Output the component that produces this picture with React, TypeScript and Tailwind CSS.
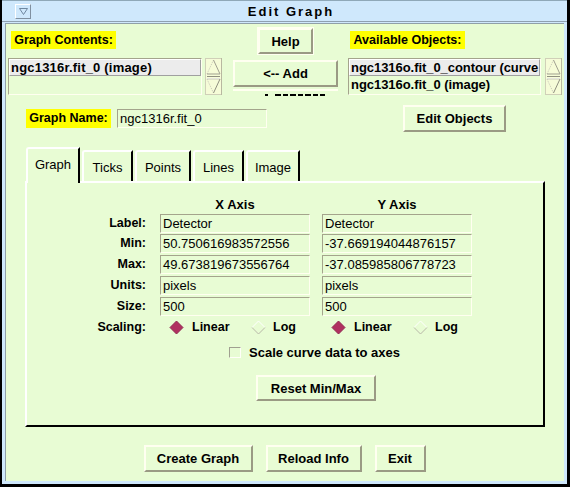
import React from "react";

function RaisedBtn({ children, className = "" }: { children: React.ReactNode; className?: string }) {
  return (
    <div
      className={`flex items-center justify-center border-2 border-t-[#fffff0] border-l-[#fffff0] border-b-[#9a9a84] border-r-[#9a9a84] bg-[#e8fcd4] font-bold text-[13px] leading-none whitespace-nowrap ${className}`}
    >
      {children}
    </div>
  );
}

function Field({ value, className = "" }: { value: string; className?: string }) {
  return (
    <div
      className={`h-full border border-t-[#a4a48c] border-l-[#a4a48c] border-b-[#fffff0] border-r-[#fffff0] flex items-center pl-[2px] text-[13px] leading-none whitespace-nowrap overflow-hidden ${className}`}
    >
      {value}
    </div>
  );
}

function ScrollArrows() {
  return (
    <svg width="17" height="37" viewBox="0 0 17 37" className="shrink-0">
      <rect x="0.5" y="0.5" width="16" height="36" fill="#f6fcd8" stroke="#d0d0b8" />
      <line x1="16.5" y1="0" x2="16.5" y2="37" stroke="#b8b8a0" />
      <polyline points="2,16 8.5,2" fill="none" stroke="#c8c8b8" strokeDasharray="1 1" />
      <polyline points="8.5,2 15,16 2,16" fill="none" stroke="#a0a090" />
      <line x1="2" y1="18.5" x2="15" y2="18.5" stroke="#909080" />
      <line x1="2" y1="20.5" x2="15" y2="20.5" stroke="#ffffff" />
      <polyline points="2,21 15,21" fill="none" stroke="#c8c8b8" />
      <polyline points="2,21 8.5,35" fill="none" stroke="#c8c8b8" strokeDasharray="1 1" />
      <polyline points="15,21 8.5,35" fill="none" stroke="#909080" />
    </svg>
  );
}

function Diamond({ filled }: { filled: boolean }) {
  return (
    <svg width="15" height="15" viewBox="0 0 15 15" className="shrink-0">
      {filled ? (
        <polygon points="7.5,1 14,7.5 7.5,14 1,7.5" fill="#b03060" stroke="#902850" strokeWidth="1" />
      ) : (
        <>
          <polyline points="1,7.5 7.5,1 14,7.5" fill="none" stroke="#ffffff" strokeWidth="1" />
          <polyline points="1,7.5 7.5,14 14,7.5" fill="none" stroke="#b8b8a8" strokeWidth="1" />
        </>
      )}
    </svg>
  );
}

function ListBox({ items, width, tracking }: { items: string[]; width: string; tracking: string }) {
  return (
    <div
      className={`${width} h-[37px] border border-t-[#a4a48c] border-l-[#a4a48c] border-b-[#fffff0] border-r-[#fffff0] overflow-hidden flex flex-col`}
    >
      {items.map((it, i) => (
        <div
          key={i}
          className={`h-[17px] shrink-0 flex items-center pl-[1px] font-bold text-[13px] ${tracking} leading-none whitespace-nowrap ${
            i === 0 ? "bg-[#ececec] border border-t-[#ffffff] border-l-[#ffffff] border-b-[#a0a0a0] border-r-[#a0a0a0]" : "border border-transparent"
          }`}
        >
          {it}
        </div>
      ))}
    </div>
  );
}

function YLabel({ children, className = "" }: { children: React.ReactNode; className?: string }) {
  return (
    <div className={`bg-[#ffff00] flex items-center justify-center font-bold text-[12.5px] leading-none whitespace-nowrap ${className}`}>
      {children}
    </div>
  );
}

function Tab({ label, selected, w }: { label: string; selected?: boolean; w: string }) {
  return (
    <div
      className={`${w} ${
        selected ? "h-[36px] -mb-[2px] pb-[4px] z-10" : "h-[31px] pt-[1px]"
      } bg-[#e8fcd4] border-l-2 border-t-2 border-r-2 border-l-white border-t-white border-r-black rounded-tl-[3px] flex items-center justify-center text-[13px] leading-none`}
    >
      {label}
    </div>
  );
}

function AxisRow({ label, x, y, mt }: { label: string; x: string; y: string; mt: string }) {
  return (
    <div className={`flex items-center h-[19px] ${mt}`}>
      <div className="w-[119px] text-right font-bold text-[12.5px] leading-none">{label}</div>
      <div className="ml-[14px] w-[150px] h-full">
        <Field value={x} />
      </div>
      <div className="ml-[12px] w-[150px] h-full">
        <Field value={y} />
      </div>
    </div>
  );
}

function RadioGroup() {
  return (
    <div className="w-[150px] flex items-center pl-[9px]">
      <div className="w-[82px] flex items-center">
        <Diamond filled />
        <span className="ml-[8px] font-bold text-[12.5px] leading-none">Linear</span>
      </div>
      <div className="flex items-center">
        <Diamond filled={false} />
        <span className="ml-[7px] font-bold text-[12.5px] leading-none">Log</span>
      </div>
    </div>
  );
}

export default function App() {
  return (
    <div className="w-[570px] h-[487px] overflow-hidden font-['Liberation_Sans',Arial,sans-serif] text-black bg-black">
      <div className="w-full h-full bg-[#cfe8fc] border-l-[2px] border-r-[3px] border-b-[3px] border-black flex flex-col">
        {/* title bar */}
        <div className="h-[22px] shrink-0 flex items-center border-t border-[#8fa8b8] border-b border-b-[#8fa0b0]">
          <div className="ml-[13px] w-[16px] h-[15px] border border-t-white border-l-white border-b-[#8090a0] border-r-[#8090a0] flex items-center justify-center">
            <svg width="9" height="7" viewBox="0 0 9 7">
              <polygon points="0.5,0.5 8.5,0.5 4.5,6.5" fill="none" stroke="#7088a0" />
            </svg>
          </div>
          <div className="flex-1 text-center font-bold text-[13px] tracking-[2px] pr-[16px] leading-none">Edit Graph</div>
        </div>

        {/* content */}
        <div className="flex-1 mx-[3px] mb-[3px] mt-[1px] bg-[#e8fcd4] border-t border-l border-[#90a0a8] flex flex-col">
          {/* row 1 */}
          <div className="flex items-start mt-[4px] pl-[2px]">
            <div className="w-[214px] flex flex-col">
              <YLabel className="mt-[3px] ml-[3px] w-[105px] h-[18px]">Graph Contents:</YLabel>
              <div className="mt-[9px] flex gap-[3px]">
                <ListBox items={["ngc1316r.fit_0 (image)"]} width="w-[195px]" tracking="tracking-[0.2px]" />
                <ScrollArrows />
              </div>
            </div>
            <div className="ml-[11px] w-[105px] flex flex-col items-center">
              <RaisedBtn className="w-[55px] h-[26px] outline outline-1 outline-[#fffff0]">Help</RaisedBtn>
              <RaisedBtn className="mt-[6px] w-full h-[27px]">&lt;-- Add</RaisedBtn>
              <div className="mt-[2px] w-full h-[8px] border-t-2 border-t-[#fffff0] flex items-start pt-[3px]">
                <div className="ml-[32px] w-[3px] h-[2px] bg-black" />
                <div className="ml-[7px] w-[6px] h-[2px] bg-black" />
                <div className="ml-[2px] w-[5px] h-[2px] bg-black" />
                <div className="ml-[2px] w-[6px] h-[2px] bg-black" />
                <div className="ml-[2px] w-[5px] h-[2px] bg-black" />
                <div className="ml-[2px] w-[6px] h-[2px] bg-black" />
                <div className="ml-[2px] w-[5px] h-[2px] bg-black" />
                <div className="ml-[2px] w-[5px] h-[2px] bg-black" />
              </div>
            </div>
            <div className="ml-[10px] flex flex-col">
              <YLabel className="mt-[3px] ml-[2px] w-[115px] h-[18px]">Available Objects:</YLabel>
              <div className="mt-[9px] flex gap-[4px]">
                <ListBox
                  items={["ngc1316o.fit_0_contour (curve", "ngc1316o.fit_0 (image)"]}
                  width="w-[193px]"
                  tracking="tracking-[-0.05px]"
                />
                <ScrollArrows />
              </div>
            </div>
          </div>

          {/* row 2 */}
          <div className="flex items-start mt-[8px]">
            <YLabel className="mt-[4px] ml-[20px] w-[85px] h-[19px]">Graph Name:</YLabel>
            <div className="mt-[4px] ml-[6px] w-[150px] h-[19px]">
              <Field value="ngc1316r.fit_0" />
            </div>
            <RaisedBtn className="ml-[136px] w-[103px] h-[27px]">Edit Objects</RaisedBtn>
          </div>

          {/* tabs */}
          <div className="flex items-end gap-[2px] mt-[15px] ml-[20px] h-[34px] relative">
            <Tab label="Graph" selected w="w-[54px]" />
            <Tab label="Ticks" w="w-[51px]" />
            <Tab label="Points" w="w-[56px]" />
            <Tab label="Lines" w="w-[51px]" />
            <Tab label="Image" w="w-[54px]" />
          </div>

          {/* panel */}
          <div className="ml-[19px] w-[520px] h-[246px] border-2 border-l-white border-t-white border-r-black border-b-black flex flex-col">
            <div className="flex items-center h-[20px] mt-[11px]">
              <div className="w-[119px]" />
              <div className="ml-[14px] w-[150px] text-center font-bold text-[13px] leading-none">X Axis</div>
              <div className="ml-[12px] w-[150px] text-center font-bold text-[13px] leading-none">Y Axis</div>
            </div>
            <AxisRow label="Label:" x="Detector" y="Detector" mt="mt-0" />
            <AxisRow label="Min:" x="50.750616983572556" y="-37.669194044876157" mt="mt-[1px]" />
            <AxisRow label="Max:" x="49.673819673556764" y="-37.085985806778723" mt="mt-[2px]" />
            <AxisRow label="Units:" x="pixels" y="pixels" mt="mt-[2px]" />
            <AxisRow label="Size:" x="500" y="500" mt="mt-[2px]" />
            <div className="flex items-center h-[18px] mt-[2px]">
              <div className="w-[119px] text-right font-bold text-[12.5px] leading-none">Scaling:</div>
              <div className="ml-[14px]">
                <RadioGroup />
              </div>
              <div className="ml-[12px]">
                <RadioGroup />
              </div>
            </div>
            <div className="flex items-center h-[14px] mt-[9px] ml-[202px]">
              <div className="w-[12px] h-[11px] border border-t-[#a0a090] border-l-[#a0a090] border-b-[#fffff8] border-r-[#fffff8]" />
              <span className="ml-[8px] font-bold text-[13px] leading-none">Scale curve data to axes</span>
            </div>
            <RaisedBtn className="mt-[16px] ml-[229px] w-[120px] h-[26px]">Reset Min/Max</RaisedBtn>
          </div>

          {/* bottom buttons */}
          <div className="flex justify-center gap-[13px] mt-[18px] pr-[1px]">
            <RaisedBtn className="w-[109px] h-[27px]">Create Graph</RaisedBtn>
            <RaisedBtn className="w-[96px] h-[27px]">Reload Info</RaisedBtn>
            <RaisedBtn className="w-[51px] h-[27px]">Exit</RaisedBtn>
          </div>
        </div>
      </div>
    </div>
  );
}
